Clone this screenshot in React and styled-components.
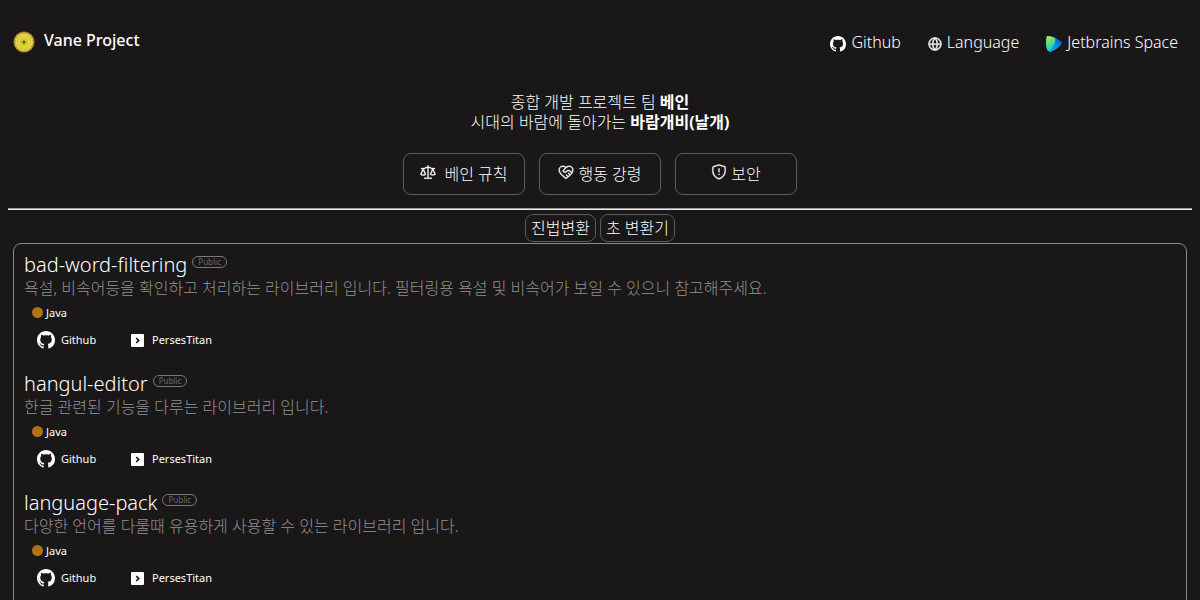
import React from 'react';
import styled, { createGlobalStyle } from 'styled-components';
import { BsGithub } from 'react-icons/bs';
import { GoCodeOfConduct, GoGlobe, GoLaw, GoShield } from 'react-icons/go';

const GlobalStyle = createGlobalStyle`
  body {
    margin: 0 8px;
    background: #191718;
    color: #fff;
    font-family: "Noto Sans", "Noto Sans CJK KR", sans-serif;
    font-size: 16px;
    font-weight: 300;
    line-height: 20px;
  }

  * {
    box-sizing: border-box;
  }

  a {
    color: inherit;
    text-decoration: none;
  }

  svg {
    display: block;
    flex: none;
  }
`;

const Header = styled.header`
  display: flex;
  justify-content: space-between;
  align-items: center;
  height: 84px;
  padding: 0 14px 0 5px;
`;

const Brand = styled.a`
  display: flex;
  align-items: center;
  gap: 9px;
  font-weight: 500;

  span {
    padding-bottom: 4px;
  }
`;

const Nav = styled.nav`
  display: flex;
  gap: 27px;
`;

const NavLink = styled.a`
  display: flex;
  align-items: center;
  gap: 5px;

  svg {
    margin-top: 4px;
  }
`;

const Hero = styled.section`
  padding-top: 8px;
  text-align: center;

  p {
    margin: 0;
  }

  b {
    font-weight: 700;
  }
`;

const Policies = styled.div`
  display: flex;
  justify-content: center;
  gap: 14px;
  margin: 21px 0 13px;
`;

const PolicyButton = styled.button`
  display: flex;
  justify-content: center;
  align-items: center;
  gap: ${props => props.$gap || 4}px;
  width: 122px;
  height: 42px;
  padding: 0;
  border: 1px solid #5c5b5b;
  border-radius: 8px;
  background: none;
  color: inherit;
  font: inherit;

  svg {
    margin-bottom: 4px;
    stroke: currentColor;
    stroke-width: 0.5;
  }
`;

const Divider = styled.hr`
  height: 2px;
  margin: 0;
  border: 0;
  border-top: 1px solid #9a9a9a;
  background: #eee;
`;

const Tools = styled.div`
  display: flex;
  justify-content: center;
  gap: 4px;
  padding: 4px 0 1px;
`;

const ToolButton = styled.button`
  height: 28px;
  padding: 0 5px;
  border: 1px solid #5c5b5b;
  border-radius: 8px;
  background: none;
  color: inherit;
  font: inherit;
`;

const RepoList = styled.main`
  margin: 0 5px;
  padding: 10px;
  border: 1px solid #8c8b8b;
  border-radius: 8px;
`;

const RepoItem = styled.article`
  padding-bottom: 23px;
`;

const RepoTitle = styled.div`
  display: flex;
  align-items: flex-start;
  gap: 5px;
  padding-bottom: 2px;

  h2 {
    margin: 0;
    font-size: 20px;
    font-weight: 300;
    line-height: 22px;
  }
`;

const Badge = styled.span`
  margin-top: 2px;
  padding: 0 5px;
  border: 1px solid #7a7979;
  border-radius: 6px;
  color: #6a6969;
  font-size: 8px;
  font-weight: 400;
  line-height: 10px;
`;

const Description = styled.p`
  margin: 0;
  color: #929191;
`;

const Lang = styled.div`
  display: flex;
  align-items: center;
  gap: 3px;
  margin: 5px 0 0 8px;
  font-size: 11px;
  font-weight: 400;

  &::before {
    content: "";
    width: 11px;
    height: 11px;
    margin-bottom: 1px;
    border-radius: 50%;
    background: #b07219;
  }
`;

const RepoLinks = styled.div`
  display: flex;
  margin: 7px 0 0 13px;
`;

const RepoLink = styled.a`
  display: flex;
  align-items: center;
  gap: 6px;
  min-width: 92px;
  font-size: 11px;
  font-weight: 400;
`;

const FlowerLogo = () => (
  <svg width="22" height="22" viewBox="0 0 22 22">
    <circle cx="11" cy="11" r="10.5" fill="#a1852b" />
    <circle cx="11" cy="11" r="9.6" fill="#c7ae2c" />
    <circle cx="11" cy="11" r="8.2" fill="#d9c52c" />
    <circle cx="11" cy="11" r="7.8" fill="none" stroke="#eee27c" strokeWidth="1.6" strokeDasharray="1.2 1.2" />
    <circle cx="11" cy="11" r="5" fill="none" stroke="#f0e55e" strokeWidth="1.6" strokeDasharray="1.2 0.8" />
    <circle cx="11" cy="11" r="3" fill="#cfc61a" />
    <circle cx="11" cy="11" r="1.5" fill="#575d0c" />
  </svg>
);

const SpaceLogo = () => (
  <svg width="16" height="16" viewBox="0 0 16 16">
    <defs>
      <linearGradient id="space-blue" x1="0" y1="1" x2="1" y2="0">
        <stop offset="0" stopColor="#12c8dc" />
        <stop offset="0.5" stopColor="#078ee6" />
        <stop offset="1" stopColor="#0b4dac" />
      </linearGradient>
      <linearGradient id="space-green" x1="0" y1="0" x2="0.5" y2="1">
        <stop offset="0" stopColor="#c5ed4b" />
        <stop offset="0.5" stopColor="#62dc79" />
        <stop offset="1" stopColor="#0bcfd1" />
      </linearGradient>
    </defs>
    <path d="M1 0C7 0 13 3 16 7Q13 13 4 16Q2 16 1 13Q-1 6 1 0Z" fill="url(#space-blue)" />
    <path d="M1 0Q6 0 9 2Q10 7 6 12L3 15Q1 15 1 13Q-1 6 1 0Z" fill="url(#space-green)" />
  </svg>
);

const ProfileIcon = () => (
  <svg width="17" height="17" viewBox="0 0 17 17">
    <rect x="2" y="2" width="13" height="13" rx="1" fill="#fff" />
    <path d="M7.2 6L9.7 8.5L7.2 11" fill="none" stroke="#191718" strokeWidth="1.7" />
  </svg>
);

const repos = [
  {
    name: 'bad-word-filtering',
    description: '욕설, 비속어등을 확인하고 처리하는 라이브러리 입니다. 필터링용 욕설 및 비속어가 보일 수 있으니 참고해주세요.'
  },
  {
    name: 'hangul-editor',
    description: '한글 관련된 기능을 다루는 라이브러리 입니다.'
  },
  {
    name: 'language-pack',
    description: '다양한 언어를 다룰때 유용하게 사용할 수 있는 라이브러리 입니다.'
  }
];

const Repo = ({ name, description }) => (
  <RepoItem>
    <RepoTitle>
      <h2><a href={`#${name}`}>{name}</a></h2>
      <Badge>Public</Badge>
    </RepoTitle>
    <Description>{description}</Description>
    <Lang>Java</Lang>
    <RepoLinks>
      <RepoLink href="#github"><BsGithub size={18} />Github</RepoLink>
      <RepoLink href="#persestitan"><ProfileIcon />PersesTitan</RepoLink>
    </RepoLinks>
  </RepoItem>
);

const App = () => (
  <>
    <GlobalStyle />
    <Header>
      <Brand href="#home"><FlowerLogo /><span>Vane Project</span></Brand>
      <Nav>
        <NavLink href="#github"><BsGithub size={16} />Github</NavLink>
        <NavLink href="#language"><GoGlobe size={14} stroke="currentColor" strokeWidth={1} />Language</NavLink>
        <NavLink href="#space"><SpaceLogo />Jetbrains Space</NavLink>
      </Nav>
    </Header>
    <Hero>
      <p>종합 개발 프로젝트 팀 <b>베인</b></p>
      <p>시대의 바람에 돌아가는 <b>바람개비(날개)</b></p>
      <Policies>
        <PolicyButton $gap={8}><GoLaw size={16} />베인 규칙</PolicyButton>
        <PolicyButton><GoCodeOfConduct size={16} />행동 강령</PolicyButton>
        <PolicyButton><GoShield size={16} />보안</PolicyButton>
      </Policies>
    </Hero>
    <Divider />
    <Tools>
      <ToolButton>진법변환</ToolButton>
      <ToolButton>초 변환기</ToolButton>
    </Tools>
    <RepoList>
      {repos.map(repo => <Repo key={repo.name} {...repo} />)}
    </RepoList>
  </>
);

export default App;
